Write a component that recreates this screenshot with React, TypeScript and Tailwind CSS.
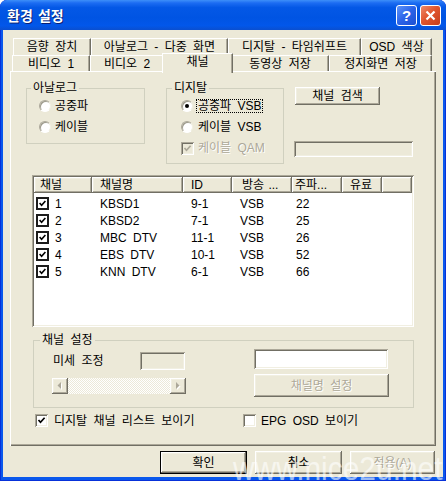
import React from "react";

const FONT = "font-['Liberation_Sans','Noto_Sans_CJK_KR',sans-serif]";

const RAISED =
  "shadow-[inset_-1px_-1px_0_#716F64,inset_1px_1px_0_#FFFFFF,inset_-2px_-2px_0_#ACA899,inset_2px_2px_0_#F1EFE2]";
const SUNKEN =
  "shadow-[inset_1px_1px_0_#ACA899,inset_-1px_-1px_0_#FFFFFF,inset_2px_2px_0_#716F64,inset_-2px_-2px_0_#F1EFE2]";
const DIS = "text-[#ACA899] [text-shadow:1px_1px_0_#FFFFFF]";

function Check({ color = "#000" }: { color?: string }) {
  return (
    <svg width="9" height="9" viewBox="0 0 9 9">
      <path d="M1.5 4 L3.5 6.3 L7.6 1.8" stroke={color} strokeWidth="1.7" fill="none" />
    </svg>
  );
}

function Radio({ on }: { on?: boolean }) {
  return (
    <div className="w-[12px] h-[12px] rounded-full bg-white border border-t-[#ACA899] border-l-[#ACA899] border-b-white border-r-[#F1EFE2] shadow-[inset_1px_1px_0_#9c998a] flex items-center justify-center shrink-0">
      {on && <div className="w-[4px] h-[4px] rounded-full bg-black" />}
    </div>
  );
}

function Box({ on, disabled }: { on?: boolean; disabled?: boolean }) {
  return (
    <div
      className={`w-[13px] h-[13px] shrink-0 flex items-center justify-center ${SUNKEN} ${
        disabled ? "bg-[#ECE9D8]" : "bg-white"
      }`}
    >
      {on && <Check color={disabled ? "#ACA899" : "#000"} />}
    </div>
  );
}

function ListBox() {
  return (
    <div className="w-[13px] h-[13px] shrink-0 border-2 border-[#1c1c1c] bg-white flex items-center justify-center">
      <svg width="7" height="7" viewBox="0 0 7 7">
        <path d="M0.6 3 L2.6 5.2 L6.4 1" stroke="#000" strokeWidth="1.6" fill="none" />
      </svg>
    </div>
  );
}

function Tab({ label, className }: { label: string; className: string }) {
  return (
    <div
      className={`h-full flex items-center justify-center border-t border-l border-white border-r border-r-[#716F64] shadow-[inset_-1px_0_0_#ACA899] whitespace-nowrap ${className}`}
    >
      {label}
    </div>
  );
}

const channels = [
  ["1", "KBSD1", "9-1", "VSB", "22"],
  ["2", "KBSD2", "7-1", "VSB", "25"],
  ["3", "MBC DTV", "11-1", "VSB", "26"],
  ["4", "EBS DTV", "10-1", "VSB", "52"],
  ["5", "KNN DTV", "6-1", "VSB", "66"],
];

function Arrow({ dir }: { dir: "l" | "r" }) {
  return (
    <div className={`w-[16px] h-[16px] bg-[#ECE9D8] ${RAISED} flex items-center justify-center shrink-0`}>
      <svg width="6" height="8" viewBox="0 0 6 8">
        {dir === "l" ? (
          <>
            <path d="M5 1 L5 8 L1.5 4.5 Z" fill="#fff" />
            <path d="M4 0 L4 7 L0.5 3.5 Z" fill="#ACA899" />
          </>
        ) : (
          <>
            <path d="M2 1 L2 8 L5.5 4.5 Z" fill="#fff" />
            <path d="M1 0 L1 7 L4.5 3.5 Z" fill="#ACA899" />
          </>
        )}
      </svg>
    </div>
  );
}

export default function App() {
  return (
    <div
      className={`relative w-[446px] h-[481px] flex flex-col bg-[#0A58EC] rounded-t-[7px] overflow-hidden shadow-[inset_1px_0_0_#0831D9,inset_-1px_0_0_#0831D9,inset_0_-1px_0_#0831D9] text-[12px] leading-[14px] [word-spacing:3px] text-black ${FONT}`}
    >
      {/* Title bar */}
      <div className="h-[30px] shrink-0 flex items-center bg-[linear-gradient(to_bottom,#3D8FF9_0%,#1C6CF2_10%,#0458E6_25%,#0054E3_60%,#0257EA_85%,#0A4FD0_100%)] rounded-t-[7px]">
        <span className="ml-[7px] text-white font-bold text-[14px] leading-[16px] [word-spacing:2px] font-['Noto_Sans_CJK_KR',sans-serif] [text-shadow:1px_1px_0_#0A1F73]">
          환경 설정
        </span>
        <div className="ml-auto mr-[5px] flex gap-[3px] items-center">
          <div className="w-[21px] h-[21px] rounded-[3px] border border-white bg-[linear-gradient(135deg,#5C93FA_0%,#2B63E8_50%,#1C4FD2_100%)] flex items-center justify-center text-white font-bold text-[15px] leading-[15px] font-['Liberation_Sans',sans-serif]">
            ?
          </div>
          <div className="w-[21px] h-[21px] rounded-[3px] border border-white bg-[linear-gradient(135deg,#EE8A6A_0%,#E0552E_45%,#C63D1B_100%)] flex items-center justify-center">
            <svg width="11" height="11" viewBox="0 0 11 11">
              <path d="M1.5 1.5 L9.5 9.5 M9.5 1.5 L1.5 9.5" stroke="#fff" strokeWidth="2.2" />
            </svg>
          </div>
        </div>
      </div>

      {/* Body */}
      <div className="flex-1 mx-[3px] mb-[4px] bg-[#ECE9D8] flex flex-col">
        {/* Tabs row 1 */}
        <div className="mt-[8px] ml-[10px] h-[17px] flex">
          <Tab label="음향 장치" className="w-[78px]" />
          <Tab label="아날로그 - 다중 화면" className="w-[137px]" />
          <Tab label="디지탈 - 타임쉬프트" className="w-[133px]" />
          <Tab label="OSD 색상" className="w-[71px]" />
        </div>
        {/* Tabs row 2 */}
        <div className="ml-[9px] h-[16px] flex items-end">
          <Tab label="비디오 1" className="w-[78px]" />
          <Tab label="비디오 2" className="w-[74px]" />
          <div className="relative z-10 w-[71px] h-[20px] -mb-[2px] -mx-[2px] bg-[#ECE9D8] border-t border-l border-white border-r border-r-[#716F64] shadow-[inset_-1px_0_0_#ACA899] flex justify-center pt-[1px]">
            채널
          </div>
          <Tab label="동영상 저장" className="w-[98px]" />
          <Tab label="정지화면 저장" className="w-[103px]" />
        </div>

        {/* Panel */}
        <div className="ml-[7px] w-[426px] h-[375px] flex flex-col shadow-[inset_1px_1px_0_#FFFFFF,inset_-1px_-1px_0_#716F64,inset_-2px_-2px_0_#ACA899]">
          {/* top row */}
          <div className="mt-[10px] ml-[16px] flex items-start">
            <fieldset className="w-[119px] h-[63px] border border-[#D0D0BF]">
              <legend className="ml-[4px] px-[2px] leading-[14px]">아날로그</legend>
              <div className="mt-[4px] ml-[12px] h-[14px] flex items-center">
                <Radio />
                <span className="ml-[4px]">공중파</span>
              </div>
              <div className="mt-[7px] ml-[12px] h-[14px] flex items-center">
                <Radio />
                <span className="ml-[4px]">케이블</span>
              </div>
            </fieldset>

            <fieldset className="ml-[21px] w-[118px] h-[83px] border border-[#D0D0BF]">
              <legend className="ml-[5px] px-[2px] leading-[14px]">디지탈</legend>
              <div className="mt-[4px] ml-[14px] h-[14px] flex items-center">
                <Radio on />
                <span className="ml-[3px] px-[1px] border border-dotted border-black leading-[12px]">공중파 VSB</span>
              </div>
              <div className="mt-[7px] ml-[14px] h-[14px] flex items-center">
                <Radio />
                <span className="ml-[5px]">케이블 VSB</span>
              </div>
              <div className="mt-[7px] ml-[14px] h-[14px] flex items-center">
                <Box on disabled />
                <span className={`ml-[4px] ${DIS}`}>케이블 QAM</span>
              </div>
            </fieldset>

            <div className="ml-[11px] flex flex-col">
              <div className={`mt-[6px] w-[85px] h-[18px] ${RAISED} flex items-center justify-center`}>
                채널 검색
              </div>
              <div className={`mt-[36px] -ml-[1px] w-[119px] h-[16px] bg-[#ECE9D8] ${SUNKEN}`} />
            </div>
          </div>

          {/* list */}
          <div className={`mt-[11px] ml-[22px] w-[382px] h-[152px] bg-white p-[2px] ${SUNKEN} flex flex-col`}>
            <div className="h-[16px] flex bg-[#ECE9D8] shrink-0 [word-spacing:1px]">
              <div className={`w-[58px] h-full pl-[6px] flex items-center ${RAISED}`}>채널</div>
              <div className={`w-[91px] h-full pl-[8px] flex items-center ${RAISED}`}>채널명</div>
              <div className={`w-[49px] h-full pl-[8px] flex items-center ${RAISED}`}>ID</div>
              <div className={`w-[60px] h-full pl-[10px] flex items-center ${RAISED}`}>방송 ...</div>
              <div className={`w-[50px] h-full pl-[3px] flex items-center ${RAISED}`}>주파...</div>
              <div className={`w-[40px] h-full pl-[8px] flex items-center ${RAISED}`}>유료</div>
              <div className={`flex-1 h-full ${RAISED}`} />
            </div>
            <div className="mt-[2px] flex flex-col">
              {channels.map((c) => (
                <div key={c[0]} className="h-[17px] flex items-center">
                  <div className="w-[58px] flex items-center pl-[2px]">
                    <ListBox />
                    <span className="ml-[6px]">{c[0]}</span>
                  </div>
                  <div className="w-[91px] pl-[8px]">{c[1]}</div>
                  <div className="w-[49px] pl-[8px]">{c[2]}</div>
                  <div className="w-[60px] pl-[8px]">{c[3]}</div>
                  <div className="w-[50px] pl-[4px]">{c[4]}</div>
                </div>
              ))}
            </div>
          </div>

          {/* channel settings */}
          <fieldset className="mt-[6px] ml-[23px] w-[381px] h-[75px] border border-[#D0D0BF]">
            <legend className="ml-[6px] px-[2px] leading-[14px]">채널 설정</legend>
            <div className="flex">
              <div className="ml-[18px] flex flex-col">
                <div className="mt-[5px] h-[18px] flex items-center">
                  <span className="ml-[1px] w-[87px]">미세 조정</span>
                  <div className={`w-[45px] h-[18px] bg-[#ECE9D8] ${SUNKEN}`} />
                </div>
                <div className="mt-[8px] w-[134px] h-[16px] flex">
                  <Arrow dir="l" />
                  <div className="flex-1 bg-[repeating-conic-gradient(#FFFFFF_0_25%,#ECE9D8_0_50%)] bg-[length:2px_2px]" />
                  <Arrow dir="r" />
                </div>
              </div>
              <div className="ml-[68px] flex flex-col">
                <div className={`mt-[2px] w-[134px] h-[20px] bg-white ${SUNKEN}`} />
                <div className={`mt-[5px] w-[135px] h-[23px] ${RAISED} flex items-center justify-center ${DIS}`}>
                  채널명 설정
                </div>
              </div>
            </div>
          </fieldset>

          {/* checkboxes */}
          <div className="mt-[6px] ml-[25px] h-[13px] flex items-center">
            <div className="w-[208px] flex items-center">
              <Box on />
              <span className="ml-[6px]">디지탈 채널 리스트 보이기</span>
            </div>
            <Box />
            <span className="ml-[5px]">EPG OSD 보이기</span>
          </div>
        </div>

        {/* bottom buttons */}
        <div className="mt-[5px] ml-[157px] flex gap-[8px]">
          <div className="w-[87px] h-[23px] border border-black">
            <div className={`w-full h-full ${RAISED} flex items-center justify-center`}>확인</div>
          </div>
          <div className={`w-[87px] h-[23px] ${RAISED} flex items-center justify-center`}>취소</div>
          <div className={`w-[85px] h-[23px] ${RAISED} flex items-center justify-center ${DIS}`}>적용(A)</div>
        </div>
      </div>

      {/* watermark overlay */}
      <span className="absolute left-[233px] top-[451px] text-[34px] leading-[34px] [word-spacing:0px] text-white/60 font-['Liberation_Sans',sans-serif] scale-x-[0.88] origin-left whitespace-nowrap pointer-events-none">
        www.nice2u.net
      </span>
    </div>
  );
}
